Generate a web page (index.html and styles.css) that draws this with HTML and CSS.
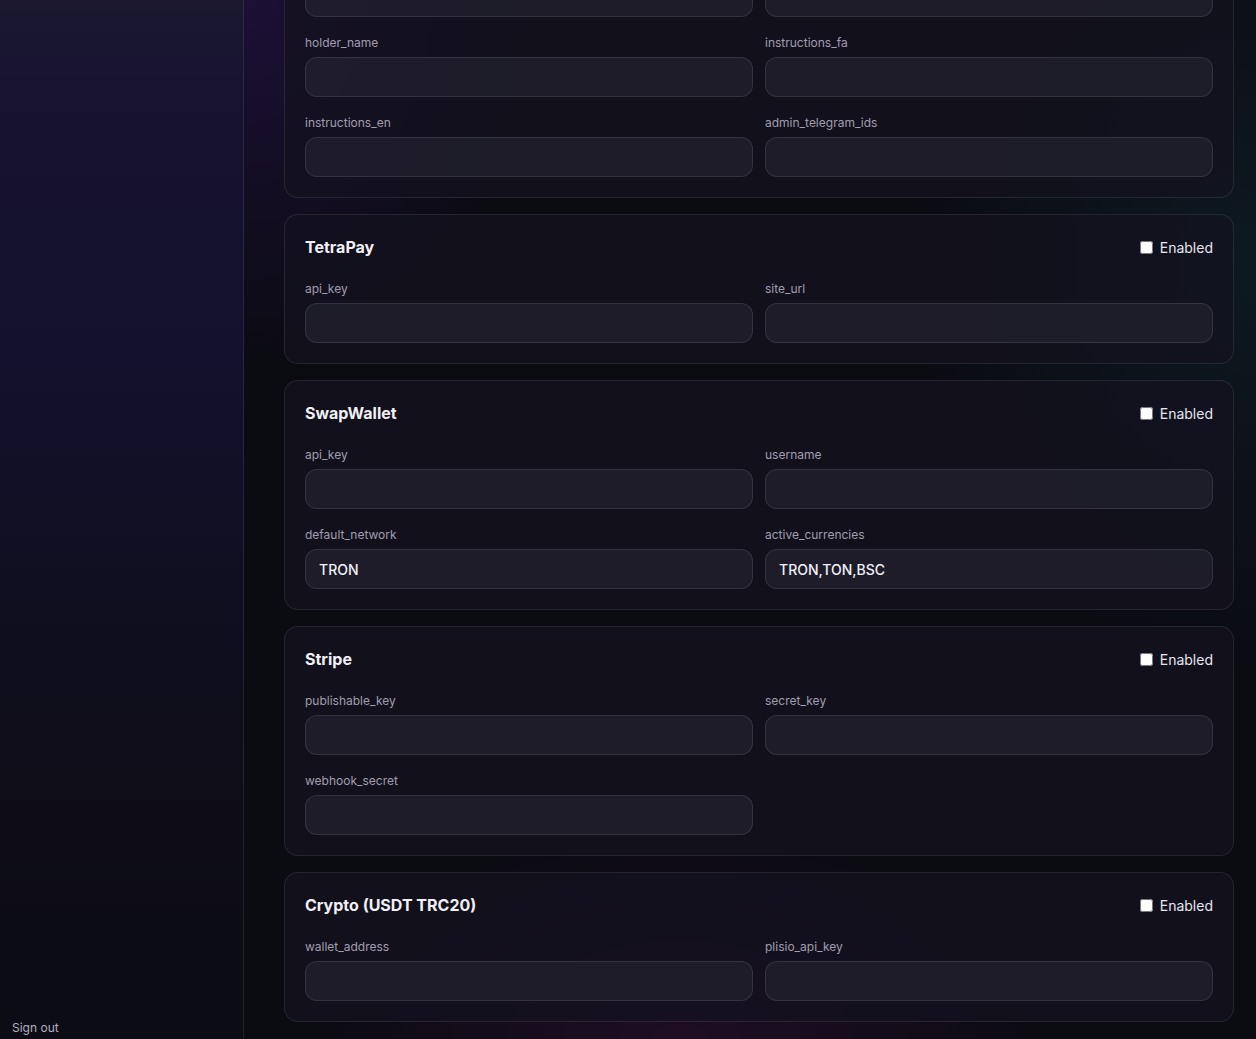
FILE: index.html
```html
<!DOCTYPE html>
<html lang="en">
<head>
  <meta charset="UTF-8">
  <meta name="viewport" content="width=device-width, initial-scale=1.0">
  <title>Payment settings</title>
  <link rel="stylesheet" href="styles.css">
</head>
<body>

  <aside class="sidebar">
    <div class="brand">Admin</div>
    <nav class="nav">
      <a href="#">Dashboard</a>
      <a href="#">Users</a>
      <a href="#">Orders</a>
      <a href="#" class="active">Payments</a>
      <a href="#">Settings</a>
    </nav>
    <a href="#" class="sign-out">Sign out</a>
  </aside>

  <main class="main">
    <h1 class="page-title">Payment gateways</h1>

    <section class="card">
      <div class="card-head">
        <h2>Zarinpal</h2>
        <label class="toggle"><input type="checkbox"> Enabled</label>
      </div>
      <div class="fields">
        <div class="field"><label>merchant_id</label><input type="text"></div>
        <div class="field"><label>callback_url</label><input type="text"></div>
      </div>
    </section>

    <!-- Card to card -->
    <section class="card">
      <div class="card-head">
        <h2>Card to Card</h2>
        <label class="toggle"><input type="checkbox"> Enabled</label>
      </div>
      <div class="fields">
        <div class="field"><label>card_number</label><input type="text"></div>
        <div class="field"><label>bank_name</label><input type="text"></div>
        <div class="field"><label>holder_name</label><input type="text"></div>
        <div class="field"><label>instructions_fa</label><input type="text"></div>
        <div class="field"><label>instructions_en</label><input type="text"></div>
        <div class="field"><label>admin_telegram_ids</label><input type="text"></div>
      </div>
    </section>

    <section class="card">
      <div class="card-head">
        <h2>TetraPay</h2>
        <label class="toggle"><input type="checkbox"> Enabled</label>
      </div>
      <div class="fields">
        <div class="field"><label>api_key</label><input type="text"></div>
        <div class="field"><label>site_url</label><input type="text"></div>
      </div>
    </section>

    <section class="card">
      <div class="card-head">
        <h2>SwapWallet</h2>
        <label class="toggle"><input type="checkbox"> Enabled</label>
      </div>
      <div class="fields">
        <div class="field"><label>api_key</label><input type="text"></div>
        <div class="field"><label>username</label><input type="text"></div>
        <div class="field"><label>default_network</label><input type="text" value="TRON"></div>
        <div class="field"><label>active_currencies</label><input type="text" value="TRON,TON,BSC"></div>
      </div>
    </section>

    <section class="card">
      <div class="card-head">
        <h2>Stripe</h2>
        <label class="toggle"><input type="checkbox"> Enabled</label>
      </div>
      <div class="fields">
        <div class="field"><label>publishable_key</label><input type="text"></div>
        <div class="field"><label>secret_key</label><input type="text"></div>
        <div class="field"><label>webhook_secret</label><input type="text"></div>
      </div>
    </section>

    <section class="card">
      <div class="card-head">
        <h2>Crypto (USDT TRC20)</h2>
        <label class="toggle"><input type="checkbox"> Enabled</label>
      </div>
      <div class="fields">
        <div class="field"><label>wallet_address</label><input type="text"></div>
        <div class="field"><label>plisio_api_key</label><input type="text"></div>
      </div>
    </section>
  </main>

  <script>
    // keep the view at the end of the list
    window.scrollTo(0, document.documentElement.scrollHeight);
    window.addEventListener('load', () => {
      window.scrollTo(0, document.documentElement.scrollHeight);
    });
  </script>
</body>
</html>
```

FILE: styles.css
```css
/* Global */
* {
  box-sizing: border-box;
}

body {
  margin: 0;
  display: flex;
  min-height: 100vh;
  font-family: 'Inter', 'Noto Sans', sans-serif;
  color: #eceaf3;
  background-color: #0b0b12;
  background-image:
    radial-gradient(ellipse 420px 520px at 250px 0px, rgba(60, 25, 120, 0.35), transparent 70%),
    radial-gradient(ellipse 500px 600px at 1256px 260px, rgba(20, 60, 70, 0.28), transparent 70%),
    radial-gradient(ellipse 520px 300px at 680px 1039px, rgba(90, 20, 90, 0.25), transparent 70%);
  background-attachment: fixed;
}

/* Sidebar */
.sidebar {
  width: 244px;
  flex-shrink: 0;
  display: flex;
  flex-direction: column;
  padding: 24px 12px 1px;
  border-right: 1px solid rgba(255, 255, 255, 0.09);
  background: linear-gradient(180deg, #1b1830 0%, #161230 12%, #13112a 40%, #0e0d19 70%, #0c0c14 100%);
  background-attachment: fixed;
}

.brand {
  font-size: 18px;
  font-weight: 700;
  margin-bottom: 20px;
}

.nav {
  display: flex;
  flex-direction: column;
  gap: 4px;
}

.nav a {
  color: #b9b6c7;
  text-decoration: none;
  font-size: 14px;
  padding: 8px 10px;
  border-radius: 8px;
}

.nav a.active {
  background: rgba(255, 255, 255, 0.06);
  color: #fff;
}

.sign-out {
  margin-top: auto;
  color: #b2afc0;
  text-decoration: none;
  font-size: 12px;
  line-height: 20px;
}

/* Main */
.main {
  flex: 1;
  display: flex;
  flex-direction: column;
  gap: 16px;
  padding: 40px 22px 17px 40px;
}

.page-title {
  margin: 0 0 8px;
  font-size: 24px;
  font-weight: 700;
}

.card {
  border: 1px solid rgba(255, 255, 255, 0.09);
  border-radius: 14px;
  background: rgba(19, 18, 30, 0.72);
  padding: 20px;
}

.card-head {
  display: flex;
  align-items: center;
  justify-content: space-between;
  height: 24px;
  margin-bottom: 20px;
}

.card-head h2 {
  margin: 0;
  font-size: 16px;
  font-weight: 700;
  color: #f1eff6;
}

.toggle {
  display: flex;
  align-items: center;
  gap: 7px;
  font-size: 14px;
  color: #e8e6ef;
}

.toggle input {
  margin: 0;
  width: 13px;
  height: 13px;
}

.fields {
  display: grid;
  grid-template-columns: 1fr 1fr;
  column-gap: 12px;
  row-gap: 16px;
}

.field label {
  display: block;
  font-size: 12px;
  line-height: 20px;
  margin-bottom: 4px;
  color: #a19eb0;
}

.field input {
  display: block;
  width: 100%;
  height: 40px;
  padding: 0 13px;
  border: 1px solid rgba(255, 255, 255, 0.1);
  border-radius: 12px;
  background: rgba(38, 36, 50, 0.6);
  color: #f2f0f7;
  font-family: inherit;
  font-size: 14px;
  font-weight: 500;
  outline: none;
}
```
